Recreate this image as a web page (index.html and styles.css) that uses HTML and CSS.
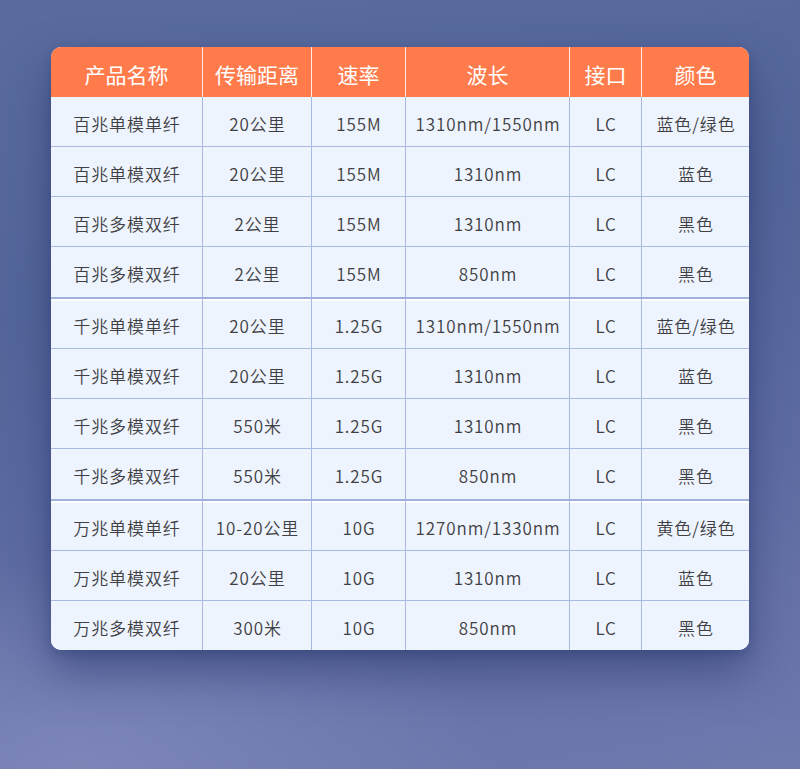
FILE: index.html
```html
<!DOCTYPE html>
<html lang="zh">
<head>
<meta charset="utf-8">
<title>光模块参数表</title>
<link rel="stylesheet" href="styles.css">
</head>
<body>
<div class="page">
  <div class="card">
    <table class="spec">
      <colgroup>
        <col class="c1"><col class="c2"><col class="c3"><col class="c4"><col class="c5"><col class="c6">
      </colgroup>
      <thead>
        <tr><th>产品名称</th><th>传输距离</th><th>速率</th><th>波长</th><th>接口</th><th>颜色</th></tr>
      </thead>
      <tbody>
        <tr><td>百兆单模单纤</td><td>20公里</td><td>155M</td><td>1310nm/1550nm</td><td>LC</td><td>蓝色/绿色</td></tr>
        <tr><td>百兆单模双纤</td><td>20公里</td><td>155M</td><td>1310nm</td><td>LC</td><td>蓝色</td></tr>
        <tr><td>百兆多模双纤</td><td>2公里</td><td>155M</td><td>1310nm</td><td>LC</td><td>黑色</td></tr>
        <tr class="group-end"><td>百兆多模双纤</td><td>2公里</td><td>155M</td><td>850nm</td><td>LC</td><td>黑色</td></tr>
        <tr class="group-start"><td>千兆单模单纤</td><td>20公里</td><td>1.25G</td><td>1310nm/1550nm</td><td>LC</td><td>蓝色/绿色</td></tr>
        <tr><td>千兆单模双纤</td><td>20公里</td><td>1.25G</td><td>1310nm</td><td>LC</td><td>蓝色</td></tr>
        <tr><td>千兆多模双纤</td><td>550米</td><td>1.25G</td><td>1310nm</td><td>LC</td><td>黑色</td></tr>
        <tr class="group-end"><td>千兆多模双纤</td><td>550米</td><td>1.25G</td><td>850nm</td><td>LC</td><td>黑色</td></tr>
        <tr class="group-start"><td>万兆单模单纤</td><td>10-20公里</td><td>10G</td><td>1270nm/1330nm</td><td>LC</td><td>黄色/绿色</td></tr>
        <tr><td>万兆单模双纤</td><td>20公里</td><td>10G</td><td>1310nm</td><td>LC</td><td>蓝色</td></tr>
        <tr class="last"><td>万兆多模双纤</td><td>300米</td><td>10G</td><td>850nm</td><td>LC</td><td>黑色</td></tr>
      </tbody>
    </table>
  </div>
</div>
</body>
</html>
```

FILE: styles.css
```css
html, body {
  margin: 0;
  padding: 0;
  height: 100%;
}

body {
  width: 800px;
  height: 769px;
  overflow: hidden;
  font-family: "Noto Sans CJK SC", "Noto Sans", sans-serif;
  background:
    radial-gradient(ellipse 600px 300px at 10% 100%, rgba(128, 136, 186, 0.9), rgba(128, 136, 186, 0) 70%),
    linear-gradient(170deg, #5a6b9f 0%, #53659a 35%, #5e6ca3 65%, #7079ae 100%);
}

.page {
  padding: 47px 51px 0 51px;
}

.card {
  width: 698px;
  border-radius: 10px;
  overflow: hidden;
  background: #eef4fe;
  box-shadow: 0 22px 45px rgba(38, 52, 105, 0.55), 0 4px 10px rgba(38, 52, 105, 0.3);
}

.spec {
  width: 698px;
  border-collapse: separate;
  border-spacing: 0;
  table-layout: fixed;
}

.c1 { width: 152px; }
.c2 { width: 109px; }
.c3 { width: 94px; }
.c4 { width: 164px; }
.c5 { width: 72px; }
.c6 { width: 107px; }

.spec th {
  height: 50px;
  padding: 3px 0 0 0;
  background: #ff7b4c;
  color: #ffffff;
  font-size: 21px;
  font-weight: 400;
  text-align: center;
  border-right: 1px solid rgba(255, 255, 255, 0.85);
  box-sizing: border-box;
}

.spec th:last-child,
.spec td:last-child {
  border-right: none;
}

.spec td {
  height: 50px;
  padding: 3px 0 0 1px;
  box-sizing: border-box;
  text-align: center;
  font-size: 17px;
  font-weight: 350;
  letter-spacing: 0.9px;
  color: #3f3f44;
  background: #eef4fe;
  border-right: 1px solid #a9b9df;
  border-bottom: 1px solid #a9b9df;
  white-space: nowrap;
}

.spec tr.group-end td {
  height: 52px;
  border-bottom: 2px solid #9eb1dd;
}

.spec tr.group-start td {
  box-shadow: inset 0 2px 0 #ffffff;
}

.spec tr.last td {
  border-bottom: none;
  height: 49px;
}
```
